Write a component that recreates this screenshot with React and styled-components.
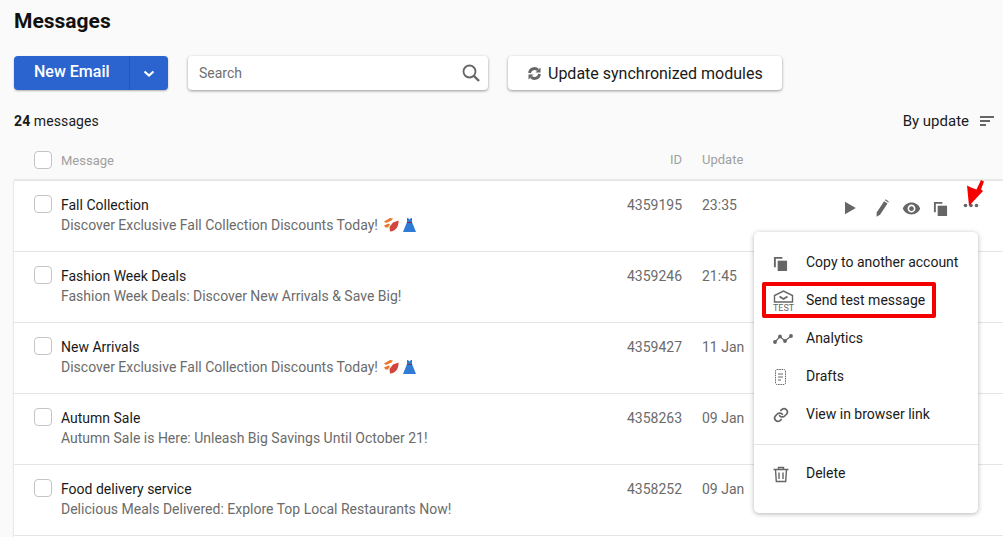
import React from 'react';
import styled, { createGlobalStyle } from 'styled-components';

const messages = [
    { title: 'Fall Collection', text: 'Discover Exclusive Fall Collection Discounts Today!', emoji: true, id: '4359195', date: '23:35', actions: true },
    { title: 'Fashion Week Deals', text: 'Fashion Week Deals: Discover New Arrivals & Save Big!', id: '4359246', date: '21:45' },
    { title: 'New Arrivals', text: 'Discover Exclusive Fall Collection Discounts Today!', emoji: true, id: '4359427', date: '11 Jan' },
    { title: 'Autumn Sale', text: 'Autumn Sale is Here: Unleash Big Savings Until October 21!', id: '4358263', date: '09 Jan' },
    { title: 'Food delivery service', text: 'Delicious Meals Delivered: Explore Top Local Restaurants Now!', id: '4358252', date: '09 Jan' },
];

const Icon = ({ size = 24, view = 24, children }) => (
    <svg width={size} height={size} viewBox={`0 0 ${view} ${view}`} fill="#666">{children}</svg>
);

const CopyIcon = ({ size = 16 }) => (
    <Icon size={size} view={16}>
        <path d="M1 1h9v2H3v9H1z" />
        <rect x="5" y="5" width="10" height="11" />
    </Icon>
);

const Emojis = () => (
    <EmojiWrap>
        <svg width="15" height="14" viewBox="0 0 15 14">
            <path d="M0 3.500 6 0l3 .5-1.500 2L2 5z" fill="#e8782c" />
            <path d="M0 7.500 4.500 5.500 6 6.500 4 9.500 1.500 9.500z" fill="#e8782c" />
            <path d="M6 13.500 5.500 9 9 4.500 14.500 2.500c.5 5-2.500 11-8.500 11z" fill="#d2453c" />
        </svg>
        <svg width="13" height="14" viewBox="0 0 13 14">
            <path d="M4 0h1l1.500 1.500L8 0h1v4l4 10H0L4 4z" fill="#2f7bd6" />
            <rect x="4" y="4" width="5" height="1" fill="#7a3050" />
        </svg>
    </EmojiWrap>
);

function MessageRow({ title, text, emoji, id, date, actions }) {
    return (
        <Row>
            <Checkbox />
            <RowText>
                <RowTitle>{title}</RowTitle>
                <RowSub>{text}{emoji && <Emojis />}</RowSub>
            </RowText>
            <IdCell>{id}</IdCell>
            <DateCell>{date}</DateCell>
            {actions && (
                <>
                    <Actions>
                        <ActionSlot $width={37}><Icon size={20}><path d="M6 4.500v15L19 12z" /></Icon></ActionSlot>
                        <ActionSlot><Icon size={18}><path d="M3.500 18 13.500 3l4.500 3-10 15-4.500 2.500zM14.500 1.500l.8-1.200 4.500 3-.8 1.200z" /></Icon></ActionSlot>
                        <ActionSlot><Icon size={19}><path d="M12 4.500C7 4.500 2.730 7.610 1 12c1.730 4.390 6 7.500 11 7.500s9.270-3.110 11-7.500c-1.730-4.390-6-7.500-11-7.500zM12 17c-2.760 0-5-2.240-5-5s2.240-5 5-5 5 2.240 5 5-2.240 5-5 5zm0-8c-1.660 0-3 1.340-3 3s1.340 3 3 3 3-1.340 3-3-1.340-3-3-3z" /></Icon></ActionSlot>
                        <ActionSlot><CopyIcon size={15} /></ActionSlot>
                        <ActionSlot $width={31}>
                            <Icon size={18} view={18}>
                                <circle cx="3.500" cy="6.500" r="1.800" />
                                <circle cx="9" cy="6.500" r="1.800" />
                                <circle cx="14.500" cy="6.500" r="1.800" />
                            </Icon>
                        </ActionSlot>
                    </Actions>
                    <Pointer width="18" height="30" viewBox="0 0 18 30">
                        <path d="M15 0l3 1.500-3 8 2 1.500L3 26 1 5.500l4 2 5.500 2z" fill="#f40000" />
                    </Pointer>
                    <RowMenu />
                </>
            )}
        </Row>
    );
}

function RowMenu() {
    return (
        <Menu>
            <MenuItem>
                <MenuIcon><CopyIcon size={15} /></MenuIcon>
                Copy to another account
            </MenuItem>
            <MenuItem>
                <MenuIcon>
                    <svg width="21" height="22" viewBox="0 0 21 22" fill="none" stroke="#666" strokeWidth="1.400">
                        <path d="M1.500 12V5.500L10.500 1l9 4.500V12z" />
                        <path d="M6.500 6.500l4 2.500 4-2.500" strokeWidth="1.800" />
                        <text x="10.500" y="20.500" textAnchor="middle" fontFamily="Roboto, sans-serif" fontSize="9" fill="#666" stroke="none">TEST</text>
                    </svg>
                </MenuIcon>
                Send test message
                <Highlight />
            </MenuItem>
            <MenuItem>
                <MenuIcon>
                    <svg width="20" height="12" viewBox="0 0 20 12" fill="#666" stroke="#666" strokeWidth="1.200">
                        <polyline points="2,9 7,3.500 12,8 18,3" fill="none" />
                        <circle cx="2" cy="9" r="1.300" />
                        <circle cx="7" cy="3.500" r="1.300" />
                        <circle cx="12" cy="8" r="1.300" />
                        <circle cx="18" cy="3" r="1.300" />
                    </svg>
                </MenuIcon>
                Analytics
            </MenuItem>
            <MenuItem>
                <MenuIcon>
                    <DraftsSvg width="11" height="16" viewBox="0 0 11 16" fill="none" stroke="#666">
                        <rect x=".5" y=".5" width="10" height="15" rx="1.500" strokeDasharray="1.500 .8" />
                        <path d="M3 5h5M3 8h5M3 11h3" />
                    </DraftsSvg>
                </MenuIcon>
                Drafts
            </MenuItem>
            <MenuItem>
                <MenuIcon>
                    <svg width="16" height="16" viewBox="0 0 24 24" fill="none" stroke="#666" strokeWidth="2.600" strokeLinecap="round" strokeLinejoin="round">
                        <path d="M10 13a5 5 0 0 0 7.500.5l3-3a5 5 0 0 0-7-7l-1.700 1.700" />
                        <path d="M14 11a5 5 0 0 0-7.500-.5l-3 3a5 5 0 0 0 7 7l1.700-1.700" />
                    </svg>
                </MenuIcon>
                View in browser link
            </MenuItem>
            <MenuDivider />
            <MenuItem>
                <MenuIcon>
                    <svg width="16" height="17" viewBox="0 0 16 17" fill="none" stroke="#666" strokeWidth="1.400">
                        <path d="M.5 3.500h15M5.500 3.500V1.500h5v2M2.500 3.500l.8 12h9.400l.8-12M6 6.500v6.500M10 6.500v6.500" />
                    </svg>
                </MenuIcon>
                Delete
            </MenuItem>
        </Menu>
    );
}

export default function App() {
    return (
        <Page>
            <GlobalStyle />
            <Title>Messages</Title>
            <Toolbar>
                <SplitButton>
                    <SplitMain>New Email</SplitMain>
                    <SplitArrow>
                        <svg width="12" height="8" viewBox="0 0 12 8" fill="none" stroke="#fff" strokeWidth="2.200">
                            <path d="M1.500 1.500 6 5.500l4.500-4" />
                        </svg>
                    </SplitArrow>
                </SplitButton>
                <SearchBox>
                    <SearchInput placeholder="Search" />
                    <svg width="18" height="18" viewBox="0 0 18 18" fill="none" stroke="#666" strokeWidth="1.800">
                        <circle cx="7.500" cy="7.500" r="6" />
                        <path d="M12 12l5 5" strokeWidth="2.400" />
                    </svg>
                </SearchBox>
                <SyncButton>
                    <svg width="13" height="13" viewBox="0 0 13 13" fill="none" stroke="#666" strokeWidth="2.800">
                        <path d="M1.500 6A5 5 0 0 1 10 3" />
                        <path d="M11.500 7A5 5 0 0 1 3 10" />
                        <path d="M12.500 .5v5H7.500z" fill="#666" stroke="none" />
                        <path d="M.5 12.500v-5h5z" fill="#666" stroke="none" />
                    </svg>
                    Update synchronized modules
                </SyncButton>
            </Toolbar>
            <CountBar>
                <span><b>24</b> messages</span>
                <SortLabel>
                    By update
                    <svg width="14" height="12" viewBox="0 0 14 12" fill="#666">
                        <rect y="1" width="14" height="2" />
                        <rect y="5" width="10" height="2" />
                        <rect y="9" width="6" height="2" />
                    </svg>
                </SortLabel>
            </CountBar>
            <HeaderRow>
                <Checkbox />
                <RowText>Message</RowText>
                <IdCell $muted>ID</IdCell>
                <DateCell $muted>Update</DateCell>
            </HeaderRow>
            <List>
                {messages.map(m => <MessageRow key={m.id} {...m} />)}
            </List>
        </Page>
    );
}

const GlobalStyle = createGlobalStyle`
    html, body {
        margin: 0;
        height: 537px;
        overflow: hidden;
        background: #fafafa;
    }
`

const Page = styled.div`
    padding-left: 14px;
    font-family: Roboto, "Liberation Sans", sans-serif;
    font-size: 14px;
    color: #1a1a1a;
`

const Title = styled.h1`
    margin: 0;
    height: 42px;
    line-height: 42px;
    font-size: 21px;
    font-weight: 700;
    color: #111;
`

const Toolbar = styled.div`
    display: flex;
    gap: 20px;
    margin-top: 14px;
    height: 34px;
`

const SplitButton = styled.div`
    display: flex;
    width: 154px;
    background: #2b64cf;
    border-radius: 4px;
    color: #fff;
    box-shadow: 0 1px 2px rgba(0, 0, 0, .3);
`

const SplitMain = styled.div`
    width: 116px;
    box-sizing: border-box;
    padding-left: 20px;
    line-height: 31px;
    font-size: 16px;
    font-weight: 500;
    border-right: 1px solid #2455b0;
`

const SplitArrow = styled.div`
    flex: 1;
    display: flex;
    align-items: center;
    justify-content: center;
    padding-top: 2px;
`

const SearchBox = styled.div`
    display: flex;
    align-items: center;
    width: 300px;
    box-sizing: border-box;
    padding: 0 8px 0 11px;
    background: #fff;
    border-radius: 4px;
    box-shadow: 0 1px 3px rgba(0, 0, 0, .4);
`

const SearchInput = styled.input`
    flex: 1;
    min-width: 0;
    border: 0;
    outline: 0;
    padding: 0;
    background: none;
    font: 14px Roboto, sans-serif;
    &::placeholder {
        color: #707070;
        opacity: 1;
    }
`

const SyncButton = styled.div`
    display: flex;
    align-items: center;
    gap: 7px;
    width: 274px;
    box-sizing: border-box;
    padding-left: 20px;
    background: #fff;
    border-radius: 4px;
    font-size: 16px;
    box-shadow: 0 1px 3px rgba(0, 0, 0, .4);
`

const CountBar = styled.div`
    display: flex;
    justify-content: space-between;
    align-items: center;
    height: 20px;
    margin-top: 21px;
    padding-right: 9px;
    letter-spacing: .1px;
    b {
        font-weight: 700;
    }
`

const SortLabel = styled.div`
    display: flex;
    align-items: center;
    gap: 11px;
    font-size: 15px;
    letter-spacing: 0;
`

const HeaderRow = styled.div`
    display: flex;
    align-items: center;
    height: 20px;
    margin-top: 19px;
    padding-left: 20px;
    font-size: 13px;
    color: #a0a0a0;
`

const List = styled.div`
    margin-top: 10px;
    padding-bottom: 10px;
    background: #fff;
    border-top: 1px solid #e4e4e4;
    box-shadow: 0 0 2px rgba(0, 0, 0, .2);
`

const Row = styled.div`
    position: relative;
    display: flex;
    align-items: flex-start;
    height: 56px;
    padding: 14px 0 0 20px;
    border-bottom: 1px solid #e4e4e4;
`

const Checkbox = styled.div`
    flex: none;
    width: 18px;
    height: 18px;
    box-sizing: border-box;
    background: #fff;
    border: 1px solid #c4c4c4;
    border-radius: 4px;
`

const RowText = styled.div`
    flex: none;
    width: 561px;
    margin-left: 9px;
`

const RowTitle = styled.div`
    line-height: 20px;
`

const RowSub = styled.div`
    display: flex;
    align-items: center;
    line-height: 20px;
    color: #6b6b6b;
`

const EmojiWrap = styled.span`
    display: inline-flex;
    align-items: center;
    gap: 4px;
    margin-left: 6px;
`

const IdCell = styled.div`
    flex: none;
    width: 60px;
    text-align: right;
    line-height: 20px;
    color: ${p => (p.$muted ? '#a0a0a0' : '#6b6b6b')};
`

const DateCell = styled.div`
    flex: none;
    width: 60px;
    margin-left: 20px;
    line-height: 20px;
    color: ${p => (p.$muted ? '#a0a0a0' : '#6b6b6b')};
`

const Actions = styled.div`
    display: flex;
    align-items: center;
    margin-left: 69px;
    height: 24px;
    margin-top: 1px;
`

const ActionSlot = styled.span`
    flex: none;
    width: ${p => p.$width || 29}px;
    display: flex;
    justify-content: center;
`

const Pointer = styled.svg`
    position: absolute;
    top: -1px;
    left: 952px;
`

const Menu = styled.div`
    position: absolute;
    top: 51px;
    left: 740px;
    z-index: 5;
    width: 224px;
    height: 281px;
    box-sizing: border-box;
    padding-top: 11px;
    background: #fff;
    border-radius: 5px;
    box-shadow: 0 1px 5px rgba(0, 0, 0, .3);
`

const MenuItem = styled.div`
    position: relative;
    display: flex;
    align-items: center;
    height: 38px;
    padding-left: 52px;
    white-space: nowrap;
`

const MenuIcon = styled.span`
    position: absolute;
    left: 19px;
    top: 0;
    bottom: 0;
    width: 21px;
    display: flex;
    align-items: center;
    justify-content: flex-start;
    padding-top: 2px;
`

const DraftsSvg = styled.svg`
    margin-left: 2px;
`

const Highlight = styled.span`
    position: absolute;
    left: 8px;
    top: 1px;
    width: 174px;
    height: 36px;
    box-sizing: border-box;
    border: 4px solid #f40000;
    border-radius: 2px;
`

const MenuDivider = styled.div`
    height: 1px;
    margin: 11px 0 9px;
    background: #e4e4e4;
`
